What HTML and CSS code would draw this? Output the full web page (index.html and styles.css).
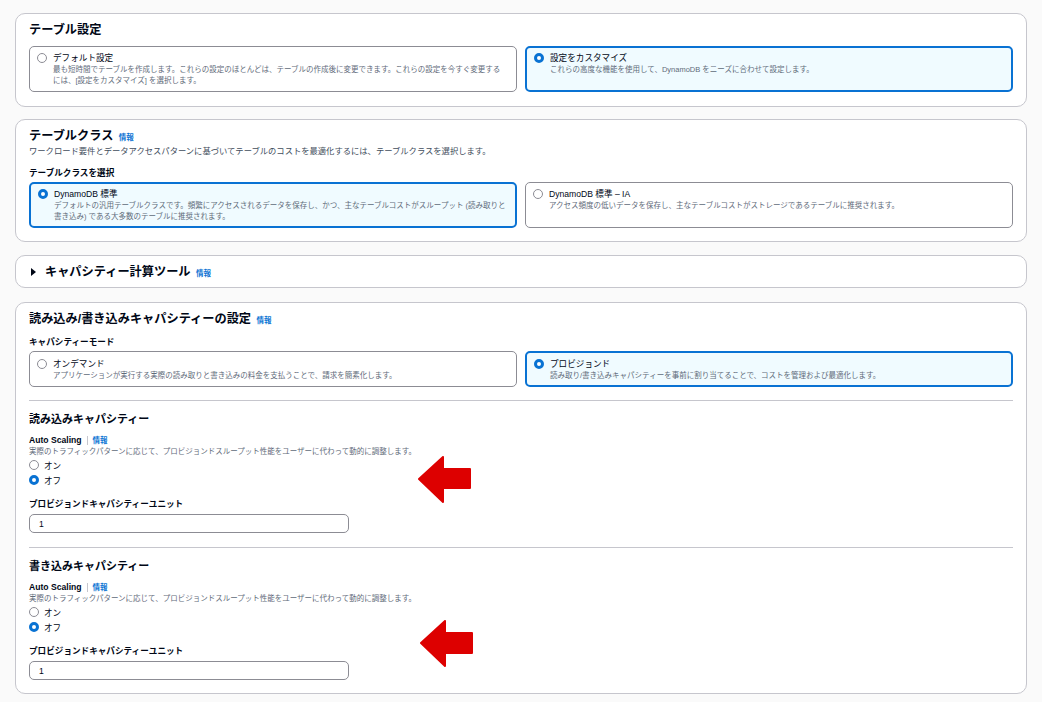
FILE: index.html
```html
<!DOCTYPE html>
<html lang="ja">
<head>
    <meta charset="UTF-8">
    <meta name="viewport" content="width=device-width, initial-scale=1.0">
    <title>テーブル設定</title>
    <link rel="stylesheet" href="styles.css">
</head>
<body>
    <div class="page">
        <!-- テーブル設定 -->
        <div class="panel">
            <h2 class="panel-title">テーブル設定</h2>
            <div class="tiles tiles-top">
                <div class="tile">
                    <span class="radio"></span>
                    <div class="tile-body">
                        <div class="tile-title">デフォルト設定</div>
                        <div class="tile-desc">最も短時間でテーブルを作成します。これらの設定のほとんどは、テーブルの作成後に変更できます。これらの設定を今すぐ変更する<br>には、[設定をカスタマイズ] を選択します。</div>
                    </div>
                </div>
                <div class="tile selected">
                    <span class="radio"></span>
                    <div class="tile-body">
                        <div class="tile-title">設定をカスタマイズ</div>
                        <div class="tile-desc">これらの高度な機能を使用して、DynamoDB をニーズに合わせて設定します。</div>
                    </div>
                </div>
            </div>
        </div>

        <!-- テーブルクラス -->
        <div class="panel">
            <h2 class="panel-title">テーブルクラス <span class="info">情報</span></h2>
            <div class="panel-desc">ワークロード要件とデータアクセスパターンに基づいてテーブルのコストを最適化するには、テーブルクラスを選択します。</div>
            <div class="field-label class-label">テーブルクラスを選択</div>
            <div class="tiles tiles-class">
                <div class="tile selected">
                    <span class="radio"></span>
                    <div class="tile-body">
                        <div class="tile-title">DynamoDB 標準</div>
                        <div class="tile-desc">デフォルトの汎用テーブルクラスです。頻繁にアクセスされるデータを保存し、かつ、主なテーブルコストがスループット (読み取りと<br>書き込み) である大多数のテーブルに推奨されます。</div>
                    </div>
                </div>
                <div class="tile">
                    <span class="radio"></span>
                    <div class="tile-body">
                        <div class="tile-title">DynamoDB 標準 – IA</div>
                        <div class="tile-desc">アクセス頻度の低いデータを保存し、主なテーブルコストがストレージであるテーブルに推奨されます。</div>
                    </div>
                </div>
            </div>
        </div>

        <!-- キャパシティー計算ツール -->
        <div class="panel panel-collapsed">
            <span class="caret"></span>
            <h2 class="panel-title">キャパシティー計算ツール <span class="info">情報</span></h2>
        </div>

        <!-- 読み込み/書き込みキャパシティー -->
        <div class="panel">
            <h2 class="panel-title">読み込み/書き込みキャパシティーの設定 <span class="info">情報</span></h2>
            <div class="field-label mode-label">キャパシティーモード</div>
            <div class="tiles tiles-mode">
                <div class="tile">
                    <span class="radio"></span>
                    <div class="tile-body">
                        <div class="tile-title">オンデマンド</div>
                        <div class="tile-desc">アプリケーションが実行する実際の読み取りと書き込みの料金を支払うことで、請求を簡素化します。</div>
                    </div>
                </div>
                <div class="tile selected">
                    <span class="radio"></span>
                    <div class="tile-body">
                        <div class="tile-title">プロビジョンド</div>
                        <div class="tile-desc">読み取り/書き込みキャパシティーを事前に割り当てることで、コストを管理および最適化します。</div>
                    </div>
                </div>
            </div>

            <div class="divider divider-first"></div>
            <div class="capacity">
                <h3 class="sub-title">読み込みキャパシティー</h3>
                <div class="auto-label">Auto Scaling<span class="info sep">情報</span></div>
                <div class="hint">実際のトラフィックパターンに応じて、プロビジョンドスループット性能をユーザーに代わって動的に調整します。</div>
                <div class="radio-row"><span class="radio"></span>オン</div>
                <div class="radio-row"><span class="radio checked"></span>オフ</div>
                <div class="field-label unit-label">プロビジョンドキャパシティーユニット</div>
                <input class="unit-input" type="text" value="1">
            </div>

            <div class="divider divider-second"></div>
            <div class="capacity">
                <h3 class="sub-title">書き込みキャパシティー</h3>
                <div class="auto-label">Auto Scaling<span class="info sep">情報</span></div>
                <div class="hint">実際のトラフィックパターンに応じて、プロビジョンドスループット性能をユーザーに代わって動的に調整します。</div>
                <div class="radio-row"><span class="radio"></span>オン</div>
                <div class="radio-row"><span class="radio checked"></span>オフ</div>
                <div class="field-label unit-label">プロビジョンドキャパシティーユニット</div>
                <input class="unit-input" type="text" value="1">
            </div>
        </div>

        <!-- 注釈の矢印 -->
        <svg class="arrow arrow-read" width="54" height="48" viewBox="0 0 54 48">
            <path d="M1 23 L25 1 L25 13 L52 13 L52 32 L25 32 L25 46 Z" fill="#dd0000" stroke="#dd0000" stroke-width="2" stroke-linejoin="round"/>
        </svg>
        <svg class="arrow arrow-write" width="54" height="48" viewBox="0 0 54 48">
            <path d="M1 23 L25 1 L25 13 L52 13 L52 33 L25 33 L25 46 Z" fill="#dd0000" stroke="#dd0000" stroke-width="2" stroke-linejoin="round"/>
        </svg>
    </div>
</body>
</html>
```

FILE: styles.css
```css
html,body{
    margin: 0;
    padding: 0;
    background-color: #fafafa;
}
body{
    font-family: "Liberation Sans", "Noto Sans CJK JP", sans-serif;
    color: #000716;
}
.page{
    position: relative;
    padding: 13px 15px;
}
.panel{
    background-color: #fff;
    border: 1px solid #c6c6cd;
    border-radius: 10px;
    padding: 8px 13px 13px;
    margin-bottom: 13px;
}
.panel:first-child{
    padding-bottom: 14px;
    margin-bottom: 12px;
}
.panel-title{
    margin: 0;
    height: 16px;
    font-size: 12.2px;
    line-height: 16px;
    font-weight: 700;
}
.info{
    font-size: 7.5px;
    line-height: 0;
    font-weight: 700;
    color: #0972d3;
    margin-left: 2px;
}
.panel-desc{
    margin-top: 1px;
    font-size: 8.3px;
    line-height: 12px;
    color: #414d5c;
}
.field-label{
    font-size: 8.6px;
    line-height: 12px;
    font-weight: 700;
}
.class-label{
    margin-top: 10px;
}
.mode-label{
    margin-top: 9px;
}
.tiles{
    display: grid;
    grid-template-columns: 1fr 1fr;
    gap: 8px;
}
.tiles-top{
    margin-top: 8px;
}
.tiles-class{
    margin-top: 3px;
}
.tiles-mode{
    margin-top: 3px;
}
.tile{
    display: flex;
    align-items: flex-start;
    gap: 6px;
    border: 1px solid #8c8c94;
    border-radius: 5px;
    padding: 5px 4px 5px 7px;
}
.tile.selected{
    border: 2px solid #0972d3;
    background-color: #f0fbff;
    padding: 4px 3px 4px 7px;
}
.tiles-mode .tile{
    padding-top: 6px;
}
.tiles-mode .tile.selected{
    padding-top: 5px;
}
.tile-body{
    flex: 1;
}
.tile-title{
    font-size: 8.6px;
    line-height: 12px;
}
.tile-desc{
    font-size: 7.5px;
    line-height: 11px;
    color: #5f6b7a;
}
.radio{
    flex: none;
    display: inline-block;
    box-sizing: border-box;
    width: 10px;
    height: 10px;
    border: 1px solid #8c8c94;
    border-radius: 50%;
    background-color: #fff;
    margin-top: 1px;
}
.selected .radio,.radio.checked{
    border: 3px solid #0972d3;
}
.panel-collapsed{
    display: flex;
    align-items: center;
    padding-bottom: 7px;
    margin-bottom: 14px;
}
.caret{
    width: 0;
    height: 0;
    border-left: 5px solid #000716;
    border-top: 4px solid transparent;
    border-bottom: 4px solid transparent;
    margin: 0 9px 0 2px;
}
.divider{
    border-top: 1px solid #c6c6cd;
}
.divider-first{
    margin-top: 13px;
}
.divider-second{
    margin-top: 14px;
}
.sub-title{
    margin: 10px 0 0;
    height: 16px;
    font-size: 11px;
    line-height: 16px;
    font-weight: 700;
}
.auto-label{
    margin-top: 7px;
    height: 12px;
    font-size: 8.6px;
    line-height: 12px;
    font-weight: 700;
}
.sep{
    margin-left: 5px;
    padding-left: 5px;
    border-left: 1px solid #c6c6cd;
    line-height: 12px;
}
.hint{
    font-size: 7.5px;
    line-height: 11px;
    color: #5f6b7a;
}
.radio-row{
    display: flex;
    align-items: center;
    gap: 5px;
    height: 15px;
    font-size: 8.6px;
}
.radio-row .radio{
    margin-top: 0;
}
.unit-label{
    margin-top: 11px;
}
.unit-input{
    display: block;
    box-sizing: border-box;
    margin-top: 4px;
    width: 320px;
    height: 19px;
    padding: 0 9px;
    border: 1px solid #8c8c94;
    border-radius: 5px;
    font-family: "Liberation Sans", sans-serif;
    font-size: 8.6px;
    color: #000716;
    outline: 0;
}
.arrow{
    position: absolute;
}
.arrow-read{
    left: 418px;
    top: 456px;
}
.arrow-write{
    left: 420px;
    top: 620px;
}
```
